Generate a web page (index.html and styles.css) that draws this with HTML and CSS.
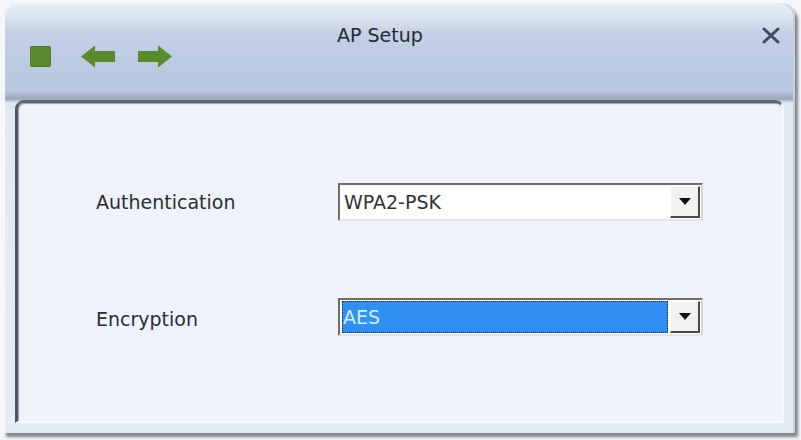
FILE: index.html
```html
<!DOCTYPE html>
<html>
<head>
<meta charset="utf-8">
<title>AP Setup</title>
<link rel="stylesheet" href="styles.css">
</head>
<body>
<div class="window">
  <div class="header">
    <div class="title-row">
      <span class="title">AP Setup</span>
      <span class="close">
        <svg width="18" height="17" viewBox="0 0 18 17"><path d="M2 2 L16 15 M16 2 L2 15" stroke="#3e4a60" stroke-width="3" stroke-linecap="round"/></svg>
      </span>
    </div>
    <div class="toolbar">
      <svg class="ico stop" width="21" height="21" viewBox="0 0 21 21"><rect x="0.5" y="0.5" width="20" height="20" rx="1.5" fill="#5b8a30" stroke="#4c7a28"/></svg>
      <svg class="ico back" width="35" height="23" viewBox="0 0 35 23"><path d="M1 11.5 L15 0.5 L15 6 L35 6 L35 17 L15 17 L15 22.5 Z" fill="#5a8a2e"/></svg>
      <svg class="ico fwd" width="35" height="23" viewBox="0 0 35 23"><path d="M34 11.5 L20 0.5 L20 6 L0 6 L0 17 L20 17 L20 22.5 Z" fill="#5a8a2e"/></svg>
    </div>
  </div>
  <div class="panel">
    <div class="form">
      <div class="label">Authentication</div>
      <div class="combo">
        <span class="value">WPA2-PSK</span>
        <span class="btn"><span class="tri"></span></span>
      </div>
      <div class="label">Encryption</div>
      <div class="combo">
        <span class="value selected">AES</span>
        <span class="btn"><span class="tri"></span></span>
      </div>
    </div>
  </div>
</div>
</body>
</html>
```

FILE: styles.css
```css
html, body {
  margin: 0;
  padding: 0;
}
body {
  width: 801px;
  height: 440px;
  background: #f4f6f8;
  font-family: "DejaVu Sans", Verdana, sans-serif;
  overflow: hidden;
}
.window {
  margin: 3px 0 0 3px;
  width: 792px;
  height: 430px;
  border-radius: 14px 14px 0 0;
  background: linear-gradient(#eaeef5 0px, #dde4ef 14px, #c4d0e6 30px, #bccae2 60px, #b9c7df 88px, #9aa6bb 96px, #e3e9f1 100px, #e6ecf3 100%);
  box-shadow: inset 2px 0 0 #f4f7fb, inset -2px 0 0 #c9d1dd, 3px 4px 3px rgba(90, 96, 106, 0.75);
  display: flex;
  flex-direction: column;
}
.header {
  height: 97px;
  box-sizing: border-box;
  padding: 22px 15px 0 27px;
}
.title-row {
  display: flex;
  align-items: center;
  height: 20px;
}
.title {
  font-size: 19px;
  line-height: 20px;
  color: #262a30;
  margin-left: 307px;
}
.close {
  margin-left: auto;
  display: flex;
}
.toolbar {
  display: flex;
  align-items: center;
  height: 23px;
}
.ico { display: block; }
.back { margin-left: 29px; }
.fwd { margin-left: 23px; }

.panel {
  flex: 1;
  margin: 0 11px 10px 12px;
  border-top: 3px solid #5c6473;
  border-left: 3px solid #4f5563;
  border-right: 2px solid #f5f8fb;
  border-bottom: 2px solid #f8fafc;
  border-radius: 9px 9px 0 0;
  background: #edf3f8;
  box-shadow: inset 1px 1px 1px #9aa2ae;
}
.form {
  display: grid;
  grid-template-columns: 242px 365px;
  row-gap: 77px;
  align-items: center;
  padding: 80px 0 0 78px;
}
.label {
  font-size: 19px;
  color: #2a2e32;
  line-height: 22px;
}
.label + .combo + .label {
  padding-top: 3px;
}
.combo {
  height: 38px;
  box-sizing: border-box;
  display: flex;
  align-items: center;
  background: #fff;
  border-top: 2px solid #6e6e6e;
  border-left: 2px solid #6e6e6e;
  border-right: 2px solid #d6d6d6;
  border-bottom: 2px solid #e4e4e4;
  padding: 1px 1px 1px 2px;
}
.value {
  flex: 1;
  align-self: stretch;
  display: flex;
  align-items: center;
  font-size: 19px;
  color: #333;
  padding-left: 2px;
}
.value.selected {
  background: #2f90f2;
  color: #cdeeff;
  outline: 1px dotted #1c2a50;
  outline-offset: -1px;
  margin-right: 2px;
  padding-left: 1px;
}
.btn {
  width: 30px;
  align-self: stretch;
  box-sizing: border-box;
  background: #f2f2f2;
  border-top: 1px solid #fff;
  border-left: 1px solid #fff;
  border-right: 2px solid #4a4a4a;
  border-bottom: 2px solid #4a4a4a;
  display: flex;
  align-items: center;
  justify-content: center;
}
.tri {
  width: 0;
  height: 0;
  border-left: 6px solid transparent;
  border-right: 6px solid transparent;
  border-top: 7px solid #111;
}
```
